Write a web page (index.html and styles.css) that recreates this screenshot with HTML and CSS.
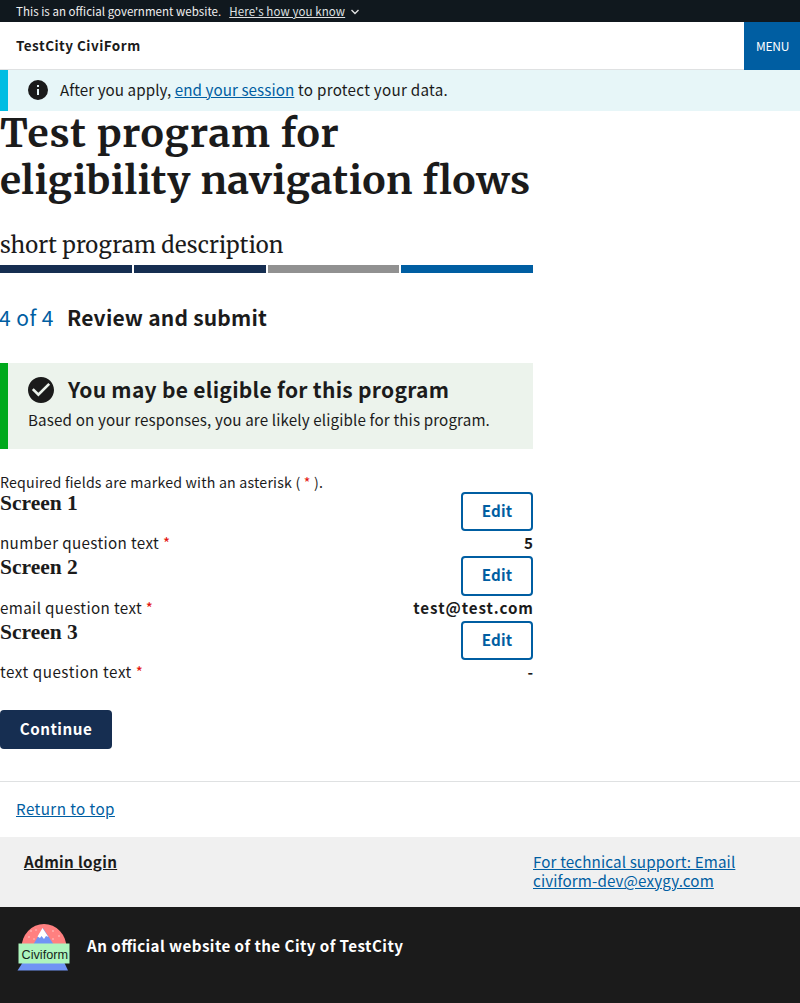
FILE: index.html
```
<!DOCTYPE html>
<html lang="en">
<head>
<meta charset="utf-8">
<title>Review and submit</title>
<link rel="stylesheet" href="styles.css">
</head>
<body>
<div class="gov-banner"><span class="gov-text">This is an official government website.</span><a class="gov-link" href="#">Here's how you know</a><svg class="chevron" viewBox="0 0 10 6"><path d="M1.500 1l3.500 3.500L8.500 1" fill="none" stroke="#dfe1e2" stroke-width="1.4"/></svg></div>
<header class="site-header"><span class="brand">TestCity CiviForm</span><button class="menu">MENU</button></header>
<div class="session-alert">
<svg class="info-icon" viewBox="0 0 24 24"><path fill="#1b1b1b" d="M12 0a12 12 0 1 0 0 24 12 12 0 0 0 0-24zm1.200 18h-2.400v-7.200h2.400V18zm0-9.600h-2.400V6h2.400v2.400z"/></svg>
<p class="session-text">After you apply, <a href="#">end your session</a><span class="session-tail"> to protect your data.</span></p>
</div>
<main class="content">
<h1 class="title"><span class="title-first">Test program for</span><br><span class="title-second">eligibility navigation flows</span></h1>
<p class="description">short program description</p>
<div class="steps"><i class="done"></i><i class="done"></i><i class="skipped"></i><i class="current"></i></div>
<h2 class="step-heading"><span class="step-count">4 of 4</span><span class="step-name">Review and submit</span></h2>
<section class="eligible">
<h3 class="eligible-head"><svg class="check-icon" viewBox="2 2 20 20"><path fill="#1b1b1b" d="M12 2C6.480 2 2 6.480 2 12s4.480 10 10 10 10-4.480 10-10S17.520 2 12 2zm-2 15l-5-5 1.410-1.410L10 14.170l7.590-7.590L19 8l-9 9z"/></svg><span class="eligible-title">You may be eligible for this program</span></h3>
<p class="eligible-text">Based on your responses, you are likely eligible for this program.</p>
</section>
<p class="required-note">Required fields are marked with an asterisk ( <b class="star">*</b> ).</p>
<section class="block"><div class="block-head"><h3>Screen 1</h3><a class="edit" href="#">Edit</a></div><div class="answer-row"><span class="question">number question text <b class="star">*</b></span><strong>5</strong></div></section>
<section class="block"><div class="block-head"><h3>Screen 2</h3><a class="edit" href="#">Edit</a></div><div class="answer-row"><span class="question">email question text <b class="star">*</b></span><strong class="mail">test@test.com</strong></div></section>
<section class="block"><div class="block-head"><h3>Screen 3</h3><a class="edit" href="#">Edit</a></div><div class="answer-row"><span class="question text-question">text question text <b class="star">*</b></span><strong>-</strong></div></section>
<button class="continue">Continue</button>
</main>
<div class="return"><a href="#">Return to top</a></div>
<div class="footer-links"><a class="admin" href="#">Admin login</a><a class="support" href="#"><span>For technical support: Email</span><span>civiform-dev@exygy.com</span></a></div>
<footer class="footer">
<svg class="logo" viewBox="0 0 54 50"><path d="M4.500 26a22.500 24 0 0 1 45 0z" fill="#ff8080"/><path d="M16 23L26 6l11 17z" fill="#7094f4"/><path d="M20.500 14.500L25.500 6l6 9-2.500-1-2 3-2.500-3-1.500 2z" fill="#fff"/><g fill="#ffd0d0"><circle cx="14" cy="9" r=".8"/><circle cx="19" cy="8" r=".7"/><circle cx="12" cy="15" r=".8"/><circle cx="36" cy="9" r=".8"/><circle cx="42" cy="14" r=".8"/><circle cx="36" cy="17" r=".8"/><circle cx="17" cy="17" r=".7"/></g><path d="M6 40h41l4 8.500H.5z" fill="#7094f4"/><path d="M1.500 21.500h51v20h-51z" fill="#aef5bd"/><text x="4.500" y="36.500" class="logo-text" textLength="46.500" lengthAdjust="spacingAndGlyphs">Civiform</text></svg>
<span class="official">An official website of the City of TestCity</span>
</footer>
</body>
</html>
```
FILE: styles.css
```
* { box-sizing: border-box; }
body { margin: 0; color: #1b1b1b; background: #fff; font-family: "Source Sans Pro", "Noto Sans CJK SC", sans-serif; font-feature-settings: "liga" 1; font-size: 15.2px; line-height: 20px; }
h1, h2, h3, p { margin: 0; }
a { color: #005ea2; text-underline-offset: 1px; text-decoration-thickness: 1px; }
button { border: 0; padding: 0; font: inherit; font-feature-settings: inherit; }
span, strong, a, p { white-space: nowrap; }
.gov-banner { display: flex; align-items: center; height: 22px; padding: 0 16px; background: #10181e; color: #f0f0f0; font-size: 11.5px; letter-spacing: .035px; }
.gov-link { margin-left: 8px; color: #dfe1e2; letter-spacing: .1px; }
.chevron { width: 10px; height: 6px; margin: 2px 0 0 5px; }
.site-header { display: flex; justify-content: space-between; align-items: center; height: 48px; padding-left: 16px; border-bottom: 1px solid #dfe1e2; }
.brand { padding-bottom: 1px; font-size: 13.5px; font-weight: 700; letter-spacing: .48px; }
.menu { width: 56px; height: 48px; align-self: flex-start; background: #005ea2; color: #fff; font-size: 12px; letter-spacing: -.25px; padding-left: 1px; }
.session-alert { display: flex; align-items: center; height: 41px; padding: 0 0 1px 20px; border-left: 8px solid #00bde3; background: #e7f6f8; }
.info-icon { width: 20px; height: 20px; margin-right: 12px; }
.session-text { padding-bottom: 2px; letter-spacing: .07px; }
.session-tail { letter-spacing: .28px; }
.content { width: 533px; }
.title { height: 118px; margin-top: -1px; font-family: Merriweather, "DejaVu Serif", serif; font-size: 39px; line-height: 47px; font-weight: 700; }
.title-first { letter-spacing: .75px; }
.title-second { letter-spacing: .46px; }
.description { height: 37px; font-family: Merriweather, "DejaVu Serif", serif; font-size: 22px; line-height: 34px; letter-spacing: .16px; }
.steps { display: grid; grid-template-columns: repeat(4, 1fr); gap: 2px; height: 8px; }
.done { background: #162e51; }
.skipped { background: #919191; }
.current { background: #005ea2; }
.step-heading { display: flex; height: 27px; margin: 31px 0 32px; font-size: 21px; line-height: 26px; letter-spacing: .21px; }
.step-count { width: 67px; color: #005ea2; font-weight: 400; text-indent: -1px; letter-spacing: .45px; }
.eligible { height: 86px; padding: 13px 20px; border-left: 8px solid #00a91c; background: #ecf3ec; }
.eligible-head { display: flex; align-items: center; height: 28px; font-size: 21px; line-height: 28px; letter-spacing: .28px; }
.eligible-title { padding-bottom: 2px; }
.check-icon { width: 26px; height: 26px; margin-right: 14px; }
.eligible-text { margin-top: 5px; letter-spacing: .13px; }
.required-note { height: 18.8px; margin: 24px 0 0; font-size: 14.2px; line-height: 19px; letter-spacing: .19px; }
.star { color: #e4140c; font-weight: 400; }
.block { height: 64.4px; }
.block-head { display: flex; justify-content: space-between; height: 39.4px; }
.block-head h3 { font-family: "Liberation Serif", serif; font-size: 21.5px; line-height: 22px; }
.edit { display: flex; align-items: center; justify-content: center; width: 72px; height: 39.4px; padding-bottom: 3px; border: 2px solid #005ea2; border-radius: 4px; font-weight: 700; letter-spacing: .2px; text-decoration: none; }
.answer-row { display: flex; justify-content: space-between; height: 25px; line-height: 23px; }
.question { letter-spacing: .36px; }
.text-question { letter-spacing: .53px; }
.mail { margin-right: -.9px; letter-spacing: .92px; }
.continue { display: block; width: 112px; height: 39px; margin: 25px 0 32px; padding-bottom: 3px; border-radius: 4px; background: #162e51; color: #fff; font-weight: 700; letter-spacing: .5px; }
.return { height: 56px; padding: 16px; border-top: 1px solid #dfe1e2; letter-spacing: .42px; }
.footer-links { display: grid; grid-template-columns: 509px 1fr; height: 70px; padding: 15px 0 0 24px; background: #f0f0f0; line-height: 19px; }
.admin { color: #1b1b1b; font-weight: 700; letter-spacing: .32px; }
.support { letter-spacing: .13px; }
.support span { display: block; width: max-content; }
.footer { display: flex; height: 96px; padding: 15px 17px; background: #1b1b1b; }
.logo { width: 54px; height: 50px; margin-right: 16px; }
.logo-text { font: 12.5px "Liberation Sans", sans-serif; fill: #16251b; }
.official { margin-top: 13px; color: #fff; font-weight: 700; letter-spacing: .43px; }
```
